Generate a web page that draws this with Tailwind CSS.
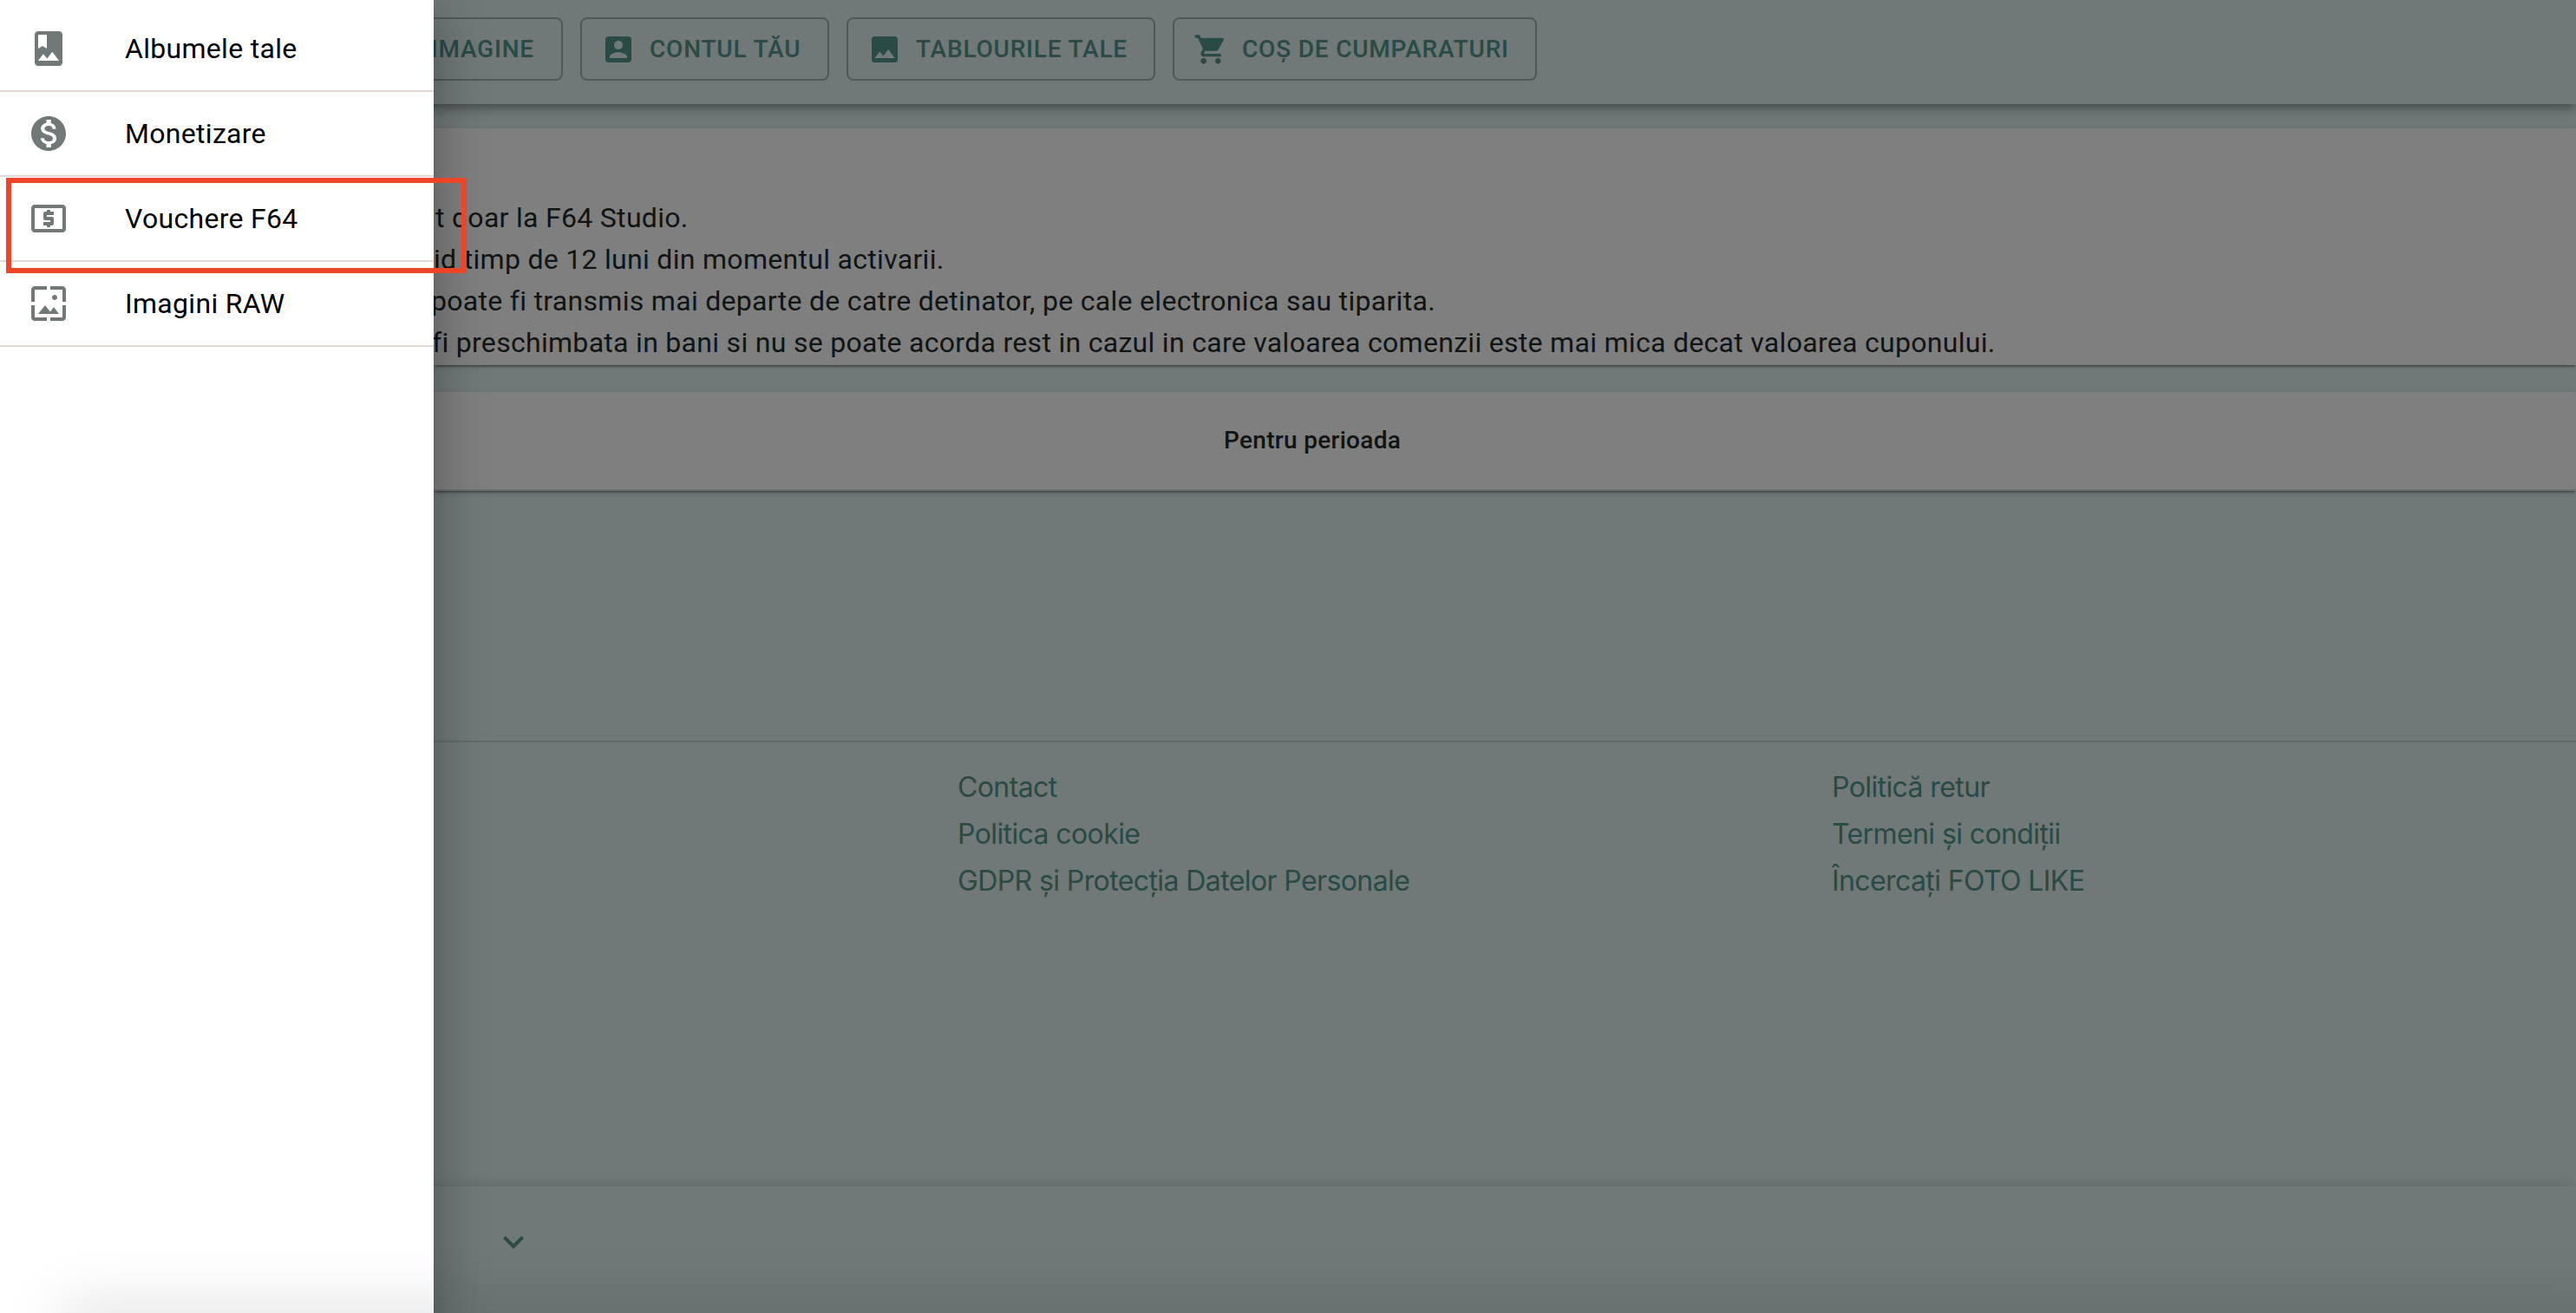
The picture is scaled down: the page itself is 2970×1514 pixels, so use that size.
<!DOCTYPE html>
<html lang="ro">
  <head>
    <meta charset="UTF-8" />
    <meta name="viewport" content="width=device-width, initial-scale=1.0" />
    <title>Vouchere F64</title>
    <script src="https://cdn.jsdelivr.net/npm/@tailwindcss/browser@4"></script>
  </head>
  <body class="relative h-[1514px] overflow-hidden bg-[#e0f2f1] font-['Roboto',sans-serif] text-[#1f2a29]">
    <!-- Page -->
    <div class="flex h-full flex-col pl-[500px]">
      <header class="relative z-10 -ml-[500px] flex h-[120px] shrink-0 items-start gap-5 bg-[#e0f2f1] pt-5 pl-[400px] text-[28px] leading-[49px] font-medium tracking-[0.8px] text-[#52948a] shadow-[0_4px_8px_-2px_rgba(0,0,0,0.2),0_8px_10px_0_rgba(0,0,0,0.14),0_2px_20px_0_rgba(0,0,0,0.12)]">
        <button class="flex h-[73px] w-[249px] items-center justify-end rounded-lg border-2 border-[#a3b1b0] pr-[31px]">IMAGINE</button>
        <button class="flex h-[73px] w-[287px] items-center gap-4 rounded-lg border-2 border-[#a3b1b0] pl-[22px] whitespace-nowrap">
          <svg class="size-10 shrink-0" viewBox="0 0 24 24" fill="currentColor"><path d="M3 5v14c0 1.1.89 2 2 2h14c1.1 0 2-.9 2-2V5c0-1.1-.9-2-2-2H5c-1.11 0-2 .9-2 2zm12 4c0 1.66-1.34 3-3 3s-3-1.34-3-3 1.34-3 3-3 3 1.34 3 3zm-9 8c0-2 4-3.1 6-3.1s6 1.1 6 3.1v1H6v-1z"/></svg>
          CONTUL TĂU
        </button>
        <button class="flex h-[73px] w-[356px] items-center gap-4 rounded-lg border-2 border-[#a3b1b0] pl-[22px] whitespace-nowrap">
          <svg class="size-10 shrink-0" viewBox="0 0 24 24" fill="currentColor"><path d="M21 19V5c0-1.1-.9-2-2-2H5c-1.1 0-2 .9-2 2v14c0 1.1.9 2 2 2h14c1.1 0 2-.9 2-2zM8.500 13.500l2.500 3.010L14.500 12l4.500 6H5l3.500-4.500z"/></svg>
          TABLOURILE TALE
        </button>
        <button class="flex h-[73px] w-[420px] items-center gap-4 rounded-lg border-2 border-[#a3b1b0] pl-[22px] whitespace-nowrap">
          <svg class="size-10 shrink-0" viewBox="0 0 24 24" fill="currentColor"><path d="M7 18c-1.100 0-1.990.9-1.990 2S5.900 22 7 22s2-.9 2-2-.9-2-2-2zM1 2v2h2l3.600 7.590-1.350 2.450c-.16.28-.25.61-.25.96 0 1.100.9 2 2 2h12v-2H7.420c-.14 0-.25-.11-.25-.25l.03-.12.900-1.630h7.450c.75 0 1.410-.41 1.750-1.030l3.580-6.490c.08-.14.12-.31.12-.48 0-.55-.45-1-1-1H5.210l-.94-2H1zm16 16c-1.100 0-1.990.9-1.990 2s.89 2 1.990 2 2-.9 2-2-.9-2-2-2z"/></svg>
          COȘ DE CUMPARATURI
        </button>
      </header>

      <section class="mt-7 h-[273px] shrink-0 bg-white pt-[79px] text-[32px] leading-[48px] tracking-[0.3px] whitespace-nowrap shadow-[0_4px_2px_-2px_rgba(0,0,0,0.2),0_2px_2px_0_rgba(0,0,0,0.14),0_2px_6px_0_rgba(0,0,0,0.12)]">
        <p class="ml-[2px]">t doar la F64 Studio.</p>
        <p>id timp de 12 luni din momentul activarii.</p>
        <p class="-ml-[3px]">poate fi transmis mai departe de catre detinator, pe cale electronica sau tiparita.</p>
        <p class="-ml-[2px]">fi preschimbata in bani si nu se poate acorda rest in cazul in care valoarea comenzii este mai mica decat valoarea cuponului.</p>
      </section>

      <section class="mt-[31px] flex h-[114px] shrink-0 items-center border-b-2 border-[#e0e0e0] bg-white pl-[911px] text-[28px] font-medium tracking-[0.3px] shadow-[0_4px_2px_-2px_rgba(0,0,0,0.2),0_2px_2px_0_rgba(0,0,0,0.14),0_2px_6px_0_rgba(0,0,0,0.12)]">
        <h2>Pentru perioada</h2>
      </section>

      <footer class="mt-[288px] flex flex-1 flex-col border-t-2 border-[#cbd5d4] text-[32px] leading-[54px] text-[#52948a]">
        <div class="flex flex-1 pt-[25px] pl-[604px] font-['Inter',sans-serif] tracking-[-0.6px] whitespace-nowrap">
          <ul class="w-[1008px]">
            <li>Contact</li>
            <li>Politica cookie</li>
            <li>GDPR și Protecția Datelor Personale</li>
          </ul>
          <ul>
            <li>Politică retur</li>
            <li>Termeni și condiții</li>
            <li>Încercați FOTO LIKE</li>
          </ul>
        </div>
        <div class="h-[146px] bg-[#e0f2f1] pt-10 pl-[68px] shadow-[0_0_14px_rgba(0,0,0,0.15)]">
          <svg class="size-12" viewBox="0 0 24 24" fill="currentColor"><path d="M16.590 8.590L12 13.170 7.410 8.590 6 10l6 6 6-6z"/></svg>
        </div>
      </footer>
    </div>

    <!-- Backdrop -->
    <div class="absolute inset-0 z-20 bg-black/50"></div>

    <!-- Drawer -->
    <nav class="absolute inset-y-0 left-0 z-30 w-[500px] bg-white pt-2 text-[32px] leading-[48px] tracking-[0.3px] text-black shadow-[0_16px_20px_-10px_rgba(0,0,0,0.2),0_32px_48px_4px_rgba(0,0,0,0.14),0_12px_60px_10px_rgba(0,0,0,0.12)]">
      <a class="flex h-[98px] items-center gap-16 border-b-2 border-[#e3d8d6] pl-8">
        <svg class="size-12 text-[#707978]" viewBox="0 0 24 24" fill="currentColor"><path d="M18 2H6c-1.100 0-2 .9-2 2v16c0 1.100.9 2 2 2h12c1.100 0 2-.9 2-2V4c0-1.100-.9-2-2-2zM6 4h5v8l-2.500-1.500L6 12V4zm0 15l3-3.860 2.140 2.580 3-3.860L18 19H6z"/></svg>
        Albumele tale
      </a>
      <a class="flex h-[98px] items-center gap-16 border-b-2 border-[#e3d8d6] pl-8">
        <svg class="size-12 text-[#707978]" viewBox="0 0 24 24" fill="currentColor"><path d="M12 2C6.480 2 2 6.480 2 12s4.480 10 10 10 10-4.480 10-10S17.520 2 12 2zm1.410 16.090V20h-2.670v-1.930c-1.710-.36-3.160-1.460-3.270-3.400h1.960c.1 1.050.82 1.870 2.650 1.870 1.960 0 2.400-.98 2.400-1.590 0-.83-.44-1.610-2.670-2.140-2.480-.6-4.180-1.620-4.180-3.670 0-1.720 1.390-2.840 3.110-3.210V4h2.670v1.950c1.860.45 2.790 1.860 2.850 3.390H14.300c-.05-1.110-.64-1.870-2.220-1.870-1.500 0-2.400.68-2.400 1.640 0 .84.65 1.390 2.670 1.910s4.180 1.390 4.180 3.910c-.01 1.830-1.380 2.830-3.120 3.160z"/></svg>
        Monetizare
      </a>
      <a class="flex h-[98px] items-center gap-16 border-b-2 border-[#e3d8d6] pl-8">
        <svg class="size-12 text-[#707978]" viewBox="0 0 24 24" fill="currentColor"><path d="M11 17h2v-1h1c.55 0 1-.45 1-1v-3c0-.55-.45-1-1-1h-3v-1h4V8h-2V7h-2v1h-1c-.55 0-1 .45-1 1v3c0 .55.45 1 1 1h3v1H9v2h2v1zm9-13H4c-1.110 0-1.990.89-1.990 2L2 18c0 1.110.89 2 2 2h16c1.110 0 2-.89 2-2V6c0-1.110-.89-2-2-2zm0 14H4V6h16v12z"/></svg>
        Vouchere F64
      </a>
      <a class="flex h-[98px] items-center gap-16 border-b-2 border-[#e3d8d6] pl-8">
        <svg class="size-12 text-[#707978]" viewBox="0 0 24 24" fill="currentColor"><path d="M4 4h7V2H4c-1.100 0-2 .9-2 2v7h2V4zm6 9l-4 5h12l-3-4-2.030 2.710L10 13zm7-4.500c0-.83-.67-1.500-1.500-1.500S14 7.670 14 8.500s.67 1.500 1.500 1.500S17 9.330 17 8.500zM20 2h-7v2h7v7h2V4c0-1.100-.9-2-2-2zm0 18h-7v2h7c1.100 0 2-.9 2-2v-7h-2v7zM4 13H2v7c0 1.100.9 2 2 2h7v-2H4v-7z"/></svg>
        Imagini RAW
      </a>
    </nav>

    <!-- Highlight around the vouchers entry -->
    <div class="absolute top-[205px] left-[7px] z-40 h-[110px] w-[531px] border-6 border-[#ee4528]"></div>

    <!-- Soft shade along the bottom edge -->
    <div class="absolute -bottom-10 left-[80px] -right-10 z-40 h-10 shadow-[0_0_70px_10px_rgba(0,0,0,0.12)]"></div>
  </body>
</html>
